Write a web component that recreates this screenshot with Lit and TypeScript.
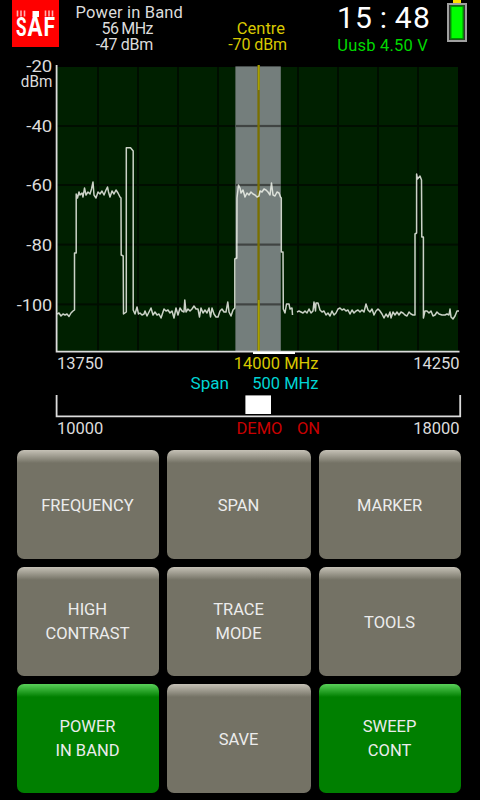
import { LitElement, html, svg, css } from "lit";
import { customElement, property } from "lit/decorators.js";
import { classMap } from "lit/directives/class-map.js";

const TRACE: number[][] = [
  [57, 314], [59, 313], [61, 316], [63, 314], [65, 315], [67, 314], [69, 316.5], [71, 313], [73, 311], [74.5, 310],
  [74.5, 253], [76.2, 253], [76.2, 194], [77.5, 198], [79, 192], [80, 195], [82, 193], [83, 197], [84.5, 188], [86, 195],
  [88, 192], [90, 194], [91.5, 189], [93, 182], [94, 195], [96, 198], [98, 192], [100, 194], [102, 191], [104, 195],
  [106, 190], [107.5, 187], [108.5, 192], [110, 197], [112, 191], [114, 194], [116, 190], [118, 193], [120, 197],
  [121, 198], [121.2, 255], [123.2, 256], [123.5, 314], [126.3, 312], [126.3, 147.7], [130.5, 147.7], [133.2, 151],
  [133.2, 310], [135, 314], [137, 307], [138.5, 314], [140, 313], [142, 315], [144, 314], [145, 311], [147, 316], [149, 312],
  [151, 308], [153, 315], [155, 312], [157, 315], [159, 314], [161, 318], [163, 312], [164, 309], [166, 311], [168, 310],
  [170, 313], [172, 311], [174, 318], [176, 308], [178, 315], [180, 308], [182, 311], [184, 312], [184.8, 300],
  [186, 312], [188, 309], [190, 311], [192, 309], [194, 306], [196, 309], [198, 309], [199.5, 317], [201, 308],
  [203, 313], [205, 310], [207, 313], [209, 308], [210.5, 317], [212, 308], [214, 314], [216, 317], [218, 317],
  [220, 311], [222, 309], [224, 312], [226, 312], [227.8, 302], [229, 312], [231, 316], [233, 310], [234.8, 308],
  [234.8, 259], [236.8, 258], [237, 198], [238.5, 185], [240, 188], [241, 193], [243, 190], [245, 197], [247, 193],
  [249, 195], [251, 192], [253, 194], [255, 195], [257, 197], [259, 196], [260, 191], [262, 192], [264, 189],
  [266, 190], [268, 192], [270, 195], [271.5, 183], [273, 195], [275, 196], [277, 192], [279, 193], [280.5, 197],
  [281.3, 198], [281.3, 252], [283, 252], [283.3, 309], [285, 313], [286.5, 304], [289, 304], [290, 309], [292, 308], [292.5, 315],
];

const TRACE_AFTER_GAP: number[][] = [
  [297, 312], [299, 311], [301, 312], [303, 313], [305, 311], [307, 313], [309, 309], [311, 313], [313, 311],
  [314, 302], [315.5, 311], [316, 303], [318, 303], [320, 310], [322, 312], [324, 311], [326, 315], [328, 313],
  [330, 316], [332, 311], [334, 315], [336, 313], [338, 309], [340, 308], [342, 310], [344, 309], [346, 311],
  [348, 310], [350, 314], [352, 310], [354, 313], [356, 311], [358, 310], [360, 312], [362, 310], [364, 312],
  [366, 304], [368, 310], [370, 312], [372, 309], [374, 315], [376, 311], [378, 309], [380, 311], [382, 314], [384, 318],
  [386, 314], [388, 317], [390, 312], [391, 318], [393, 312], [395, 315], [397, 312], [399, 315], [401, 312],
  [403, 313], [405, 315], [407, 316], [409, 312], [411, 314], [413, 315], [415, 315], [415, 234], [416.6, 233],
  [416.6, 174], [417.5, 179], [420, 176], [421.5, 180], [421.8, 237], [423.4, 237], [423.4, 318], [425, 311], [427, 311],
  [429, 313], [431, 311], [433, 316], [435, 315], [437, 312], [439, 314], [442, 315], [445, 315], [447, 314],
  [449, 315], [450, 309], [451, 317], [453, 319], [455, 316], [457, 311], [459, 311],
];

const line = (pts: number[][]) => pts.map((p) => p.join(",")).join(" ");

@customElement("saf-header")
class SafHeader extends LitElement {
  static styles = css`
    :host { display: flex; height: 60px; padding-left: 12px; box-sizing: border-box; color: #dcdcdc; font-size: 16.5px; line-height: 16px; }
    svg { display: block; flex: none; }
    .logo { width: 47px; height: 47px; }
    .logo text { font-family: Roboto, "Liberation Sans", sans-serif; font-weight: 700; fill: #fff; }
    .readout { width: 124px; padding-top: 5px; display: flex; flex-direction: column; align-items: flex-end; box-sizing: border-box; white-space: nowrap; }
    .title { letter-spacing: 0.15px; }
    .value { padding-right: 30px; letter-spacing: -0.3px; font-size: 16px; }
    .value.freq { letter-spacing: -0.5px; word-spacing: -0.8px; }
    .centre { width: 104px; padding-top: 21px; box-sizing: border-box; text-align: right; color: #d8c800; white-space: nowrap; }
    .centre .name { padding-right: 2px; }
    .level { font-size: 16px; letter-spacing: -0.1px; }
    .status { width: 144px; padding-top: 2px; box-sizing: border-box; text-align: right; white-space: nowrap; }
    .clock { font-size: 30px; line-height: 31px; color: #fff; letter-spacing: 1.2px; word-spacing: -2px; }
    .usb { padding: 5px 3px 0 0; color: #00d800; letter-spacing: 0.2px; }
    .battery { width: 20px; height: 42px; margin-left: 16px; }
  `;
  render() {
    return html`
      <svg class="logo" viewBox="0 0 47 47">
        <rect width="47" height="47" fill="#ff0000" />
        <path d="M5.5 10.5v6M9 10.5v6M12.5 10.5v6M33.5 10.5v6M37 10.5v6M40.5 10.5v6" stroke="#ffb0b0" stroke-width="1.6" />
        <rect x="20.5" y="11" width="6.5" height="6" fill="#fff" />
        <text x="4" y="36" font-size="25" textLength="10.5" lengthAdjust="spacingAndGlyphs">S</text>
        <text x="15.5" y="36" font-size="29" textLength="15" lengthAdjust="spacingAndGlyphs">A</text>
        <text x="31.5" y="36" font-size="25" textLength="11.5" lengthAdjust="spacingAndGlyphs">F</text>
      </svg>
      <div class="readout">
        <div class="title">Power in Band</div>
        <div class="value freq">56 MHz</div>
        <div class="value">-47 dBm</div>
      </div>
      <div class="centre"><div class="name">Centre</div><div class="level">-70 dBm</div></div>
      <div class="status"><div class="clock">15 : 48</div><div class="usb">Uusb 4.50 V</div></div>
      <svg class="battery" viewBox="0 0 20 42">
        <rect x="6" y="0" width="8" height="3.5" fill="#ffe000" />
        <rect x="1" y="4" width="18" height="37" fill="#333" stroke="#a0a0a0" stroke-width="2" />
        <rect x="3.2" y="5.5" width="13.6" height="34" fill="#009000" />
        <rect x="4.5" y="7" width="11" height="31" fill="#00ff00" />
      </svg>
    `;
  }
}

@customElement("saf-spectrum")
class SafSpectrum extends LitElement {
  static styles = css`
    :host { display: block; height: 382px; }
    svg { display: block; overflow: visible; }
    text { font-family: Roboto, "Liberation Sans", sans-serif; font-size: 16.5px; fill: #dcdcdc; }
    .marker { fill: #d8c800; }
    .span { fill: #00d4d4; }
    .demo { fill: #c80000; }
    .end { text-anchor: end; }
    .trace { fill: none; stroke: #eef2ea; stroke-width: 1.5; stroke-opacity: 0.85; stroke-linejoin: round; }
    .axis { fill: none; stroke: #dcdcdc; stroke-width: 1.8; }
  `;
  render() {
    const cols = [98, 138, 178, 218, 258, 298, 338, 378, 418];
    const rows = [126, 185, 244.6, 304.4];
    const levels: [string, number, number][] = [["-20", 72, 26], ["dBm", 87, 31.5], ["-40", 132, 26], ["-60", 190.5, 26], ["-80", 250.5, 26], ["-100", 310.5, 35.5]];
    return html`
      <svg width="480" height="382" viewBox="0 60 480 382">
        <rect x="57" y="67" width="401" height="284" fill="#002000" />
        ${cols.map((x) => svg`<rect x=${x - 1} y="67" width="2" height="284" fill="#000e00" />`)}
        ${rows.map((y) => svg`<rect x="57" y=${y - 1} width="401" height="2" fill="#000e00" />`)}
        <rect x="235.4" y="66.4" width="45.4" height="285" fill="#747e7c" />
        ${rows.map((y) => svg`<rect x="236" y=${y - 1.1} width="45" height="2.2" fill="#404442" />`)}
        <rect x="257.4" y="65" width="2.3" height="286" fill="#7a7000" />
        <rect x="258" y="65" width="1.6" height="25" fill="#a8a000" />
        <rect x="258" y="300" width="1.6" height="51" fill="#a8a000" />
        <polyline class="trace" points=${line(TRACE)} />
        <polyline class="trace" points=${line(TRACE_AFTER_GAP)} />
        <path class="axis" d="M56.6 65V351.6H459.5" />
        <rect x="253" y="352" width="42" height="2" fill="#fff" />
        ${levels.map(([t, y, w]) => svg`<text x=${52.3 - w} y=${y} textLength=${w} lengthAdjust="spacingAndGlyphs">${t}</text>`)}
        <text x="57" y="369">13750</text>
        <text class="marker end" x="318.5" y="369">14000 MHz</text>
        <text class="end" x="459.5" y="369">14250</text>
        <text class="span" x="190.5" y="388.5" textLength="38.5" lengthAdjust="spacingAndGlyphs">Span</text>
        <text class="span end" x="318.5" y="388.5">500 MHz</text>
        <path class="axis" d="M56.6 395V416.3H460.2V395" />
        <rect x="245.4" y="395.4" width="25.6" height="18.6" fill="#fff" />
        <text x="57" y="433.5">10000</text>
        <text class="demo" x="236.5" y="433.5">DEMO</text>
        <text class="demo" x="297" y="433.5">ON</text>
        <text class="end" x="459.5" y="433.5">18000</text>
      </svg>
    `;
  }
}

@customElement("saf-key")
class SafKey extends LitElement {
  @property({ attribute: false }) lines: string[] = [];
  @property({ type: Boolean }) active = false;
  static styles = css`
    :host { display: block; }
    .key { width: 100%; height: 100%; border: 0; border-radius: 7px; padding: 0 1px 0 0; display: flex; flex-direction: column; align-items: center; justify-content: center;
      font: 16.5px/24px Roboto, "Liberation Sans", sans-serif; color: #ececec; white-space: nowrap;
      background: linear-gradient(#c5c1b6, #747265 13px) #747265; }
    .key.single { padding-top: 3px; }
    .key.active { background: linear-gradient(#5ad05a, #007f00 13px) #007f00; }
  `;
  render() {
    return html`<button class=${classMap({ key: true, active: this.active, single: this.lines.length === 1 })}>${this.lines.map((l) => html`<span>${l}</span>`)}</button>`;
  }
}

@customElement("app-root")
class AppRoot extends LitElement {
  static styles = css`
    :host { display: flex; flex-direction: column; width: 480px; height: 800px; overflow: hidden; background: #000; font-family: Roboto, "Liberation Sans", sans-serif; }
    .keys { display: grid; grid-template-columns: 142px 143.5px 142px; grid-template-rows: repeat(3, 109px); gap: 8px 8.3px; padding: 8px 0 0 17px; }
  `;
  render() {
    const keys: [string[], boolean][] = [
      [["FREQUENCY"], false], [["SPAN"], false], [["MARKER"], false],
      [["HIGH", "CONTRAST"], false], [["TRACE", "MODE"], false], [["TOOLS"], false],
      [["POWER", "IN BAND"], true], [["SAVE"], false], [["SWEEP", "CONT"], true],
    ];
    return html`
      <saf-header></saf-header>
      <saf-spectrum></saf-spectrum>
      <div class="keys">${keys.map(([l, a]) => html`<saf-key .lines=${l} ?active=${a}></saf-key>`)}</div>
    `;
  }
}
